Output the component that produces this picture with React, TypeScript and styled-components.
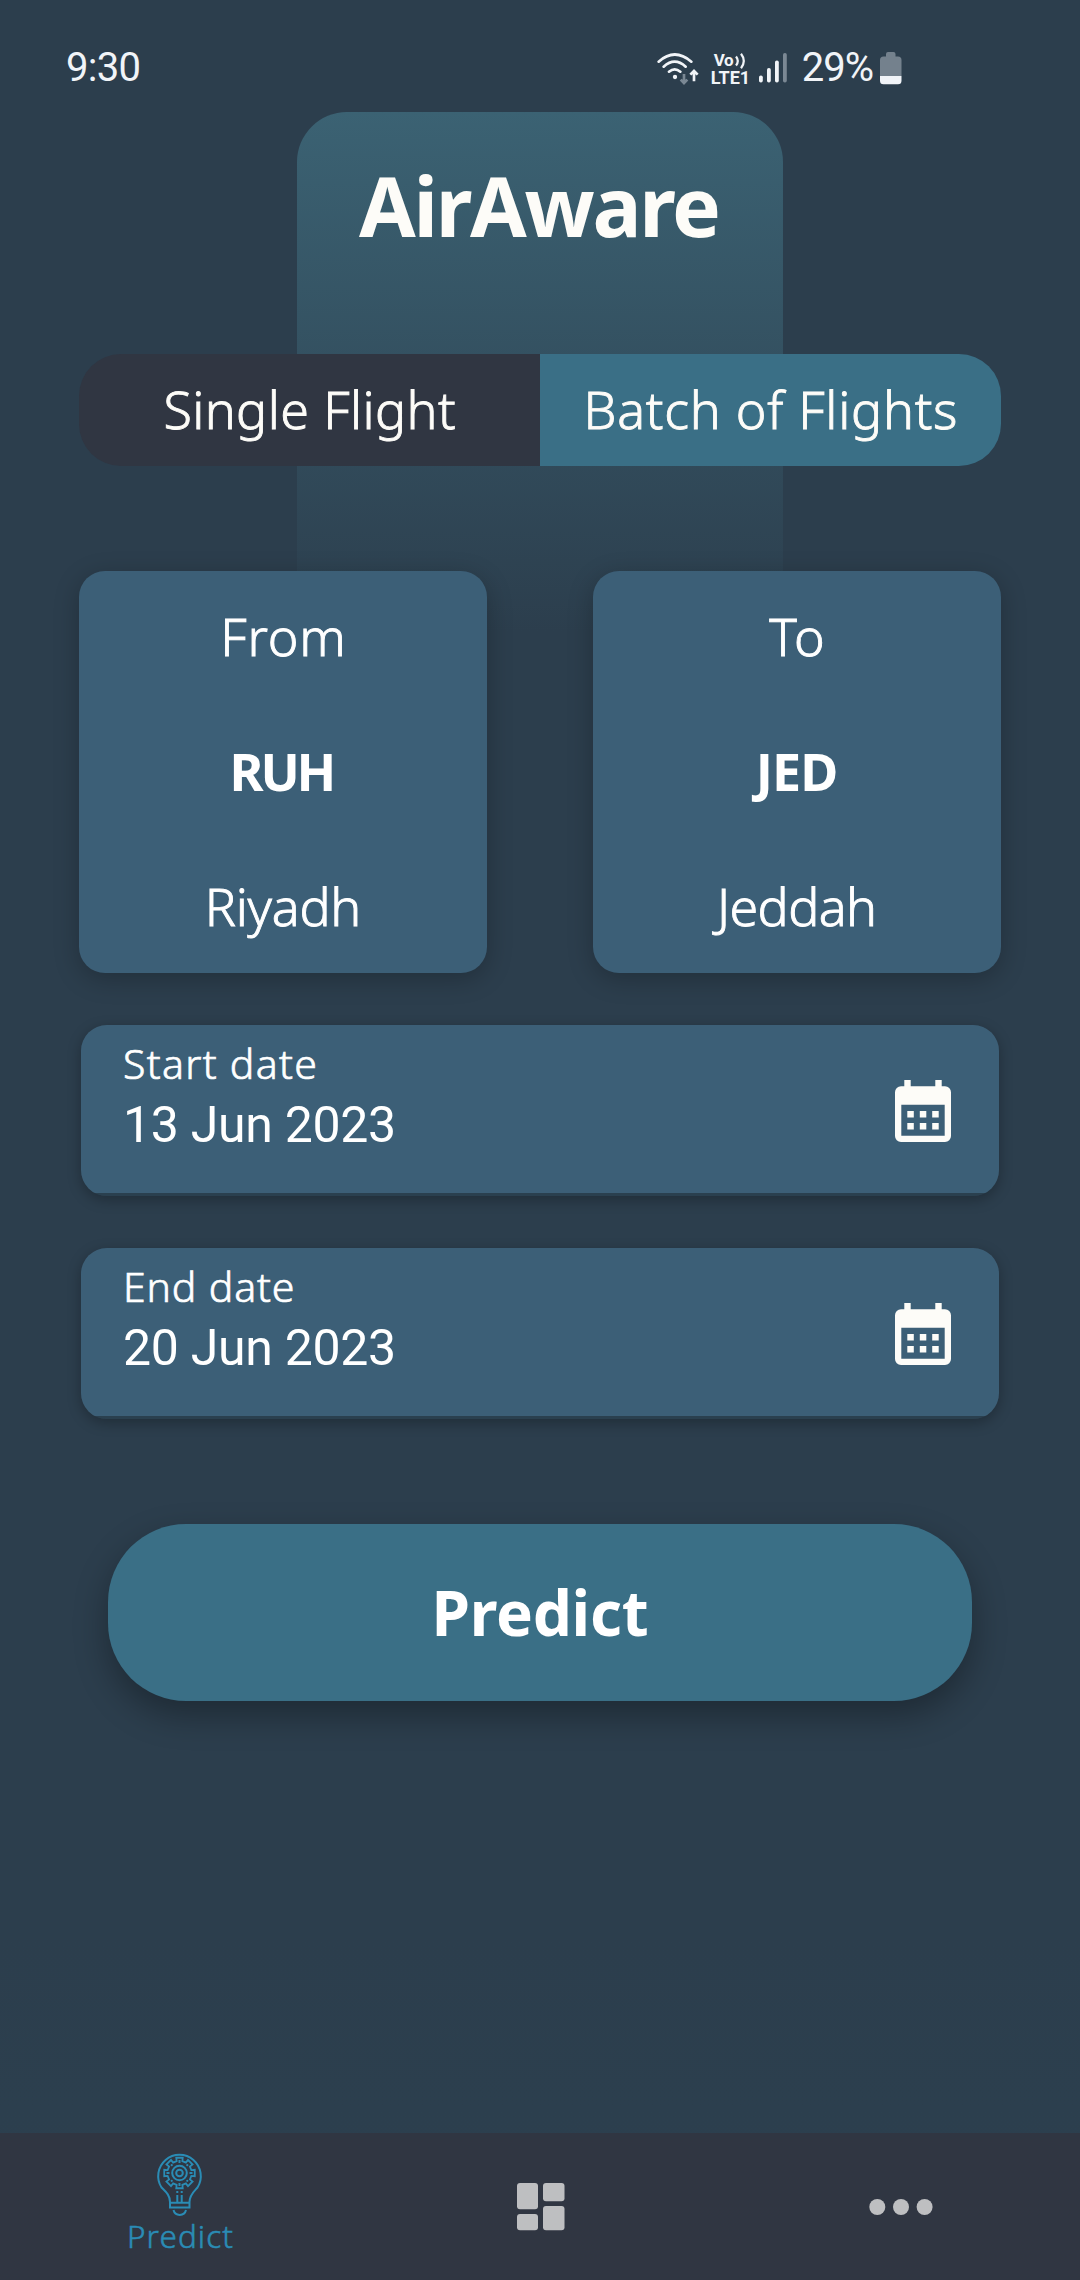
import React from "react";
import styled, { createGlobalStyle } from "styled-components";

const sans = `"Noto Sans", "Open Sans", sans-serif`;
const roboto = `Roboto, "Noto Sans", sans-serif`;
const cream = "#fdfcf8";

const Global = createGlobalStyle`
  * { box-sizing: border-box; }
  body { margin: 0; background: #2c3e4d; }
  button { border: 0; padding: 0; background: none; color: inherit; font: inherit; }
`;

const Screen = styled.div`
  position: relative;
  isolation: isolate;
  display: flex;
  flex-direction: column;
  width: 1080px;
  height: 2280px;
  overflow: hidden;
  background: linear-gradient(#2c3e4d 0%, #2c3e4d 85%, #2c404f 100%);
  color: #fff;
  font-family: ${sans};
`;

const Glow = styled.div`
  position: absolute;
  z-index: -1;
  top: 112px;
  left: 297px;
  width: 486px;
  height: 520px;
  border-radius: 50px 50px 0 0;
  background: linear-gradient(#3b6273, rgba(59, 98, 115, 0));
`;

const Text = styled.span<{
  $size: number;
  $line: number;
  $weight?: number;
  $track?: number;
  $roboto?: boolean;
  $color?: string;
}>`
  font-family: ${(p) => (p.$roboto ? roboto : sans)};
  font-size: ${(p) => p.$size}px;
  line-height: ${(p) => p.$line}px;
  font-weight: ${(p) => p.$weight ?? 360};
  letter-spacing: ${(p) => p.$track ?? 0}px;
  margin: 0 ${(p) => -(p.$track ?? 0)}px 0 0;
  color: ${(p) => p.$color ?? "#fff"};
  -webkit-text-stroke: ${(p) => (p.$weight ? 0 : p.$size * 0.017)}px currentColor;
  white-space: nowrap;
`;

const StatusBar = styled.div`
  display: flex;
  justify-content: space-between;
  align-items: center;
  height: 112px;
  padding: 24px 178px 0 66px;
`;

const StatusIcons = styled.div`
  display: flex;
  align-items: center;
`;

const Volte = styled.div`
  display: flex;
  flex-direction: column;
  align-items: flex-start;
  width: 39px;
  margin: 3px 9px 0 11px;
`;

const VolteTop = styled.div`
  display: flex;
  align-items: center;
  padding-left: 3px;
`;

const Percent = styled.div`
  display: flex;
  margin: 0 6px 0 14px;
`;

const Header = styled.header`
  display: flex;
  justify-content: center;
  height: 242px;
  padding-top: 38px;
`;

const Segments = styled.div`
  display: grid;
  grid-template-columns: 1fr 1fr;
  height: 112px;
  margin: 0 79px;
  border-radius: 42px;
  overflow: hidden;
`;

const Segment = styled.button<{ $active?: boolean }>`
  display: flex;
  align-items: center;
  justify-content: center;
  padding-bottom: 3px;
  background: ${(p) => (p.$active ? "#303642" : "#3a6f86")};
`;

const Airports = styled.div`
  display: flex;
  justify-content: space-between;
  margin: 105px 79px 0;
`;

const AirportCard = styled.div`
  display: flex;
  flex-direction: column;
  align-items: center;
  justify-content: space-between;
  width: 408px;
  height: 402px;
  padding: 35px 0 37px;
  border-radius: 26px;
  background: #3c5f77;
  box-shadow: 0 6px 26px rgba(0, 0, 0, 0.24);
`;

const Dates = styled.div`
  display: flex;
  flex-direction: column;
  gap: 52px;
  margin: 52px 81px 0;
`;

const DateField = styled.div`
  display: flex;
  justify-content: space-between;
  height: 171px;
  padding: 13px 48px 0 42px;
  border-radius: 26px;
  background: linear-gradient(#3c5f77 168px, #2a404f 168px);
  box-shadow: 0 4px 14px rgba(0, 0, 0, 0.28);
`;

const DateText = styled.div`
  display: flex;
  flex-direction: column;
  align-items: flex-start;
  gap: 7px;
`;

const CalendarSvg = styled.svg`
  width: 56px;
  height: 62px;
  margin-top: 42px;
`;

const PredictButton = styled.button`
  display: flex;
  align-items: center;
  justify-content: center;
  height: 177px;
  margin: 105px 108px 0;
  padding-bottom: 1px;
  border-radius: 78px;
  background: #3a6f86;
  box-shadow: 0 14px 34px rgba(0, 0, 0, 0.32);
`;

const Nav = styled.nav`
  display: grid;
  grid-template-columns: repeat(3, 1fr);
  height: 147px;
  margin-top: auto;
  background: #303642;
`;

const NavItem = styled.button`
  display: flex;
  flex-direction: column;
  align-items: center;
  justify-content: center;
  padding-left: 2px;
`;

const ActiveNavItem = styled(NavItem)`
  justify-content: flex-start;
  padding: 19px 0 0;
`;

const Wifi = () => (
  <svg width="44" height="34" viewBox="48 60 132 102" fill="none" stroke="#f1f4f8" strokeWidth="8" strokeLinecap="round">
    <path d="M56 92Q104 49 154 92M71 107Q104 77 137 107M87 122Q104 108 121 122" />
    <circle cx="105" cy="138" r="6.5" fill="#f1f4f8" stroke="none" />
    <path d="M132 129V153M122 146L132 156L142 146" stroke="#7b8894" strokeLinecap="butt" />
    <path d="M162 151V124M151 131L162 120L173 131" strokeLinecap="butt" />
  </svg>
);

const VolteWaves = () => (
  <svg width="13" height="16" viewBox="0 0 13 16" fill="none" stroke="#f1f4f8" strokeWidth="2.2">
    <path d="M2 3.5Q5.6 8 2 12.5M7 .8Q12.6 8 7 15.2" />
  </svg>
);

const Signal = () => (
  <svg width="29" height="30" viewBox="0 0 29 30" fill="#f1f4f8">
    <rect x="0" y="22.5" width="3.8" height="7" rx="1.8" />
    <rect x="8" y="15" width="3.8" height="14.5" rx="1.8" />
    <rect x="16" y="7.5" width="3.8" height="22" rx="1.8" />
    <rect x="24" y="0" width="3.8" height="29.5" rx="1.8" fill="#7b8894" />
  </svg>
);

const Battery = () => (
  <svg width="22" height="33" viewBox="0 0 22 33" fill="#74818d">
    <path d="M6 4.5V2a2 2 0 0 1 2-2h5.5a2 2 0 0 1 2 2V4.5H18a3.5 3.5 0 0 1 3.5 3.5V24H0V8a3.5 3.5 0 0 1 3.5-3.5Z" />
    <path d="M0 24H21.5V28.8a3.5 3.5 0 0 1-3.5 3.5H3.5A3.5 3.5 0 0 1 0 28.8Z" fill="#f1f4f8" />
  </svg>
);

const Calendar = () => (
  <CalendarSvg viewBox="0 0 56 62" fill={cream}>
    <path
      fillRule="evenodd"
      d="M9.3 0H15.7V6.2H40.3V0H46.7V6.2H50A6 6 0 0 1 56 12.2V56A6 6 0 0 1 50 62H6A6 6 0 0 1 0 56V12.2A6 6 0 0 1 6 6.2H9.3ZM6.3 24.7V55.7H49.7V24.7Z"
    />
    {[31, 43].map((y) =>
      [12.3, 24.8, 37.2].map((x) => <rect key={`${x}-${y}`} x={x} y={y} width="6.5" height="6.5" />)
    )}
  </CalendarSvg>
);

// Outline of an eight-toothed gear centred in the bulb.
const gearPoints = (() => {
  const pts: string[] = [];
  for (let i = 0; i < 8; i++) {
    const steps: [number, number][] = [[-13.5, 12.2], [-12, 15.6], [12, 15.6], [13.5, 12.2]];
    for (const [a, r] of steps) {
      const t = ((i * 45 + a) * Math.PI) / 180;
      pts.push(`${(23.5 + r * Math.cos(t)).toFixed(2)},${(21 + r * Math.sin(t)).toFixed(2)}`);
    }
  }
  return pts.join(" ");
})();

const diagonalDots = [45, 135, 225, 315].map((a) => [
  23.5 + 11 * Math.cos((a * Math.PI) / 180),
  21 + 11 * Math.sin((a * Math.PI) / 180),
]);

const Bulb = () => (
  <svg width="48" height="64" viewBox="0 0 48 64" fill="none" stroke="#2a8cb5" strokeWidth="2">
    <path d="M14 55.5H33.5V50C33.5 43 38 39.5 41.5 35.5A21.3 21.3 0 1 0 5.5 35.5C9.5 39.5 14 43 14 50ZM14 50.7H33.5" />
    <path d="M17.5 58C19 64.5 28.5 64.5 30 58" />
    <polygon points={gearPoints} strokeWidth="1.8" />
    <circle cx="23.5" cy="21" r="7.3" />
    <circle cx="23.5" cy="21" r="3.3" />
    <path d="M21.3 43V50M25.7 43V50M21.3 39V41M25.7 39V41" />
    <path d="M23.5 8V11M23.5 31V34M10.5 21H13.5M33.5 21H36.5" />
    {diagonalDots.map(([x, y]) => (
      <circle key={`${x}-${y}`} cx={x} cy={y} r="1.1" fill="#2a8cb5" stroke="none" />
    ))}
  </svg>
);

const Dashboard = () => (
  <svg width="48" height="48" viewBox="0 0 48 48" fill="#bebfc1">
    <rect x="0" y="0" width="21" height="26.3" rx="3" />
    <rect x="26" y="0" width="21.5" height="18.3" rx="3" />
    <rect x="0" y="31" width="21" height="16.3" rx="3" />
    <rect x="26" y="23" width="21.5" height="24.3" rx="3" />
  </svg>
);

const Dots = () => (
  <svg width="64" height="16" viewBox="0 0 64 16" fill="#bebfc1">
    <circle cx="8.3" cy="8" r="8" />
    <circle cx="32" cy="8" r="8" />
    <circle cx="55.6" cy="8" r="8" />
  </svg>
);

const airports = [
  { label: "From", code: "RUH", city: "Riyadh", labelTrack: 0.9, codeTrack: -3.2, cityTrack: -0.2 },
  { label: "To", code: "JED", city: "Jeddah", labelTrack: 0.7, codeTrack: -0.9, cityTrack: -0.6 },
];

const dates = [
  { label: "Start date", value: "13 Jun 2023", track: 1.3 },
  { label: "End date", value: "20 Jun 2023", track: 0.85 },
];

export default function App() {
  return (
    <Screen>
      <Global />
      <Glow />
      <StatusBar>
        <Text $size={40} $line={60} $weight={400} $track={-0.7} $roboto $color="#f1f4f8">9:30</Text>
        <StatusIcons>
          <Wifi />
          <Volte>
            <VolteTop>
              <Text $size={17} $line={17} $weight={700} $track={-0.5} $roboto $color="#f1f4f8">Vo</Text>
              <VolteWaves />
            </VolteTop>
            <Text $size={18} $line={18} $weight={700} $roboto $color="#f1f4f8">LTE1</Text>
          </Volte>
          <Signal />
          <Percent>
            <Text $size={40} $line={60} $weight={400} $track={-1} $roboto $color="#f1f4f8">29%</Text>
          </Percent>
          <Battery />
        </StatusIcons>
      </StatusBar>
      <Header>
        <Text as="h1" $size={82} $line={110} $weight={700} $track={-2.28} $color={cream}>AirAware</Text>
      </Header>
      <Segments>
        <Segment $active>
          <Text $size={52} $line={60} $track={0.4} $color={cream}>Single Flight</Text>
        </Segment>
        <Segment>
          <Text $size={52} $line={60} $track={0.75} $color={cream}>Batch of Flights</Text>
        </Segment>
      </Segments>
      <Airports>
        {airports.map((a) => (
          <AirportCard key={a.code}>
            <Text $size={52} $line={60} $track={a.labelTrack}>{a.label}</Text>
            <Text $size={52} $line={60} $weight={700} $track={a.codeTrack}>{a.code}</Text>
            <Text $size={52} $line={60} $track={a.cityTrack}>{a.city}</Text>
          </AirportCard>
        ))}
      </Airports>
      <Dates>
        {dates.map((d) => (
          <DateField key={d.label}>
            <DateText>
              <Text $size={41} $line={50} $track={d.track}>{d.label}</Text>
              <Text $size={50} $line={60} $weight={400} $track={-0.3} $roboto>{d.value}</Text>
            </DateText>
            <Calendar />
          </DateField>
        ))}
      </Dates>
      <PredictButton>
        <Text $size={62} $line={80} $weight={700} $track={-0.25}>Predict</Text>
      </PredictButton>
      <Nav>
        <ActiveNavItem>
          <Bulb />
          <Text $size={31.5} $line={40} $track={1.05} $color="#2a8cb5">Predict</Text>
        </ActiveNavItem>
        <NavItem><Dashboard /></NavItem>
        <NavItem><Dots /></NavItem>
      </Nav>
    </Screen>
  );
}
